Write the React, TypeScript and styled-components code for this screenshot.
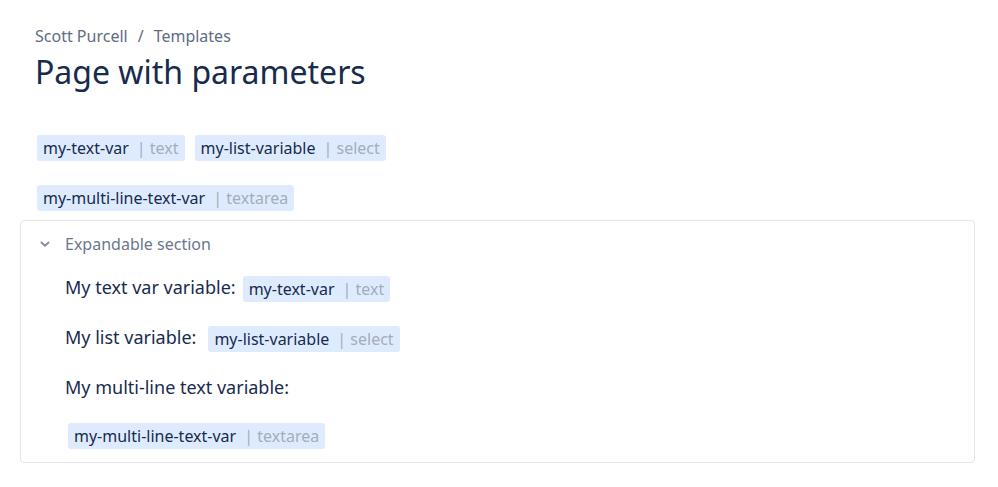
import React from "react";
import styled, { createGlobalStyle } from "styled-components";

const Global = createGlobalStyle`
  html, body { margin: 0; padding: 0; background: #ffffff; }
  body { font-family: "Noto Sans", "Open Sans", sans-serif; color: #172b4d; }
`;

const Page = styled.div`
  width: 998px;
  height: 487px;
  box-sizing: border-box;
  padding: 24px 23px 0 20px;
  display: flex;
  flex-direction: column;
`;

const Header = styled.div`
  padding-left: 15px;
  display: flex;
  flex-direction: column;
`;

const Breadcrumb = styled.div`
  font-size: 16px;
  line-height: 24px;
  color: #5e6c84;
  display: flex;
  gap: 10px;
`;

const Title = styled.h1`
  margin: 4px 0 0 0;
  font-size: 32px;
  font-weight: 400;
  line-height: 40px;
  color: #172b4d;
`;

const ChipLine = styled.div<{ $top: number }>`
  margin-top: ${(p) => p.$top}px;
  padding-left: 17px;
  display: flex;
  gap: 10px;
  height: 26px;
`;

const Chip = styled.span`
  display: inline-flex;
  align-items: center;
  height: 26px;
  box-sizing: border-box;
  padding: 0 6px;
  background: #deebff;
  border-radius: 3px;
  font-size: 16px;
  color: #172b4d;
  white-space: nowrap;
`;

const ChipType = styled.span`
  color: #a5adba;
  margin-left: 8px;
`;

const Expand = styled.div`
  margin-top: 9px;
  border: 1px solid #e4e6ea;
  border-radius: 4px;
  padding: 10px 0 13px 0;
  display: flex;
  flex-direction: column;
`;

const ExpandHeader = styled.div`
  display: flex;
  align-items: center;
  height: 26px;
  padding-left: 18px;
  gap: 14px;
  font-size: 16px;
  color: #6b778c;
`;

const Body = styled.div`
  padding-left: 44px;
  display: flex;
  flex-direction: column;
`;

const Row = styled.div<{ $top: number; $indent?: number; $gap?: number }>`
  margin-top: ${(p) => p.$top}px;
  padding-left: ${(p) => p.$indent ?? 0}px;
  display: flex;
  align-items: center;
  gap: ${(p) => p.$gap ?? 7}px;
  height: 26px;
  font-size: 18px;
  color: #172b4d;
`;

const Label = styled.span`
  position: relative;
  top: -2px;
`;

const Chevron = () => (
  <svg width="12" height="12" viewBox="0 0 12 12">
    <path d="M2.5 4.5 L6 7.8 L9.5 4.5" fill="none" stroke="#8993a4" strokeWidth="2" strokeLinecap="round" strokeLinejoin="round" />
  </svg>
);

const Var = ({ name, type }: { name: string; type: string }) => (
  <Chip>
    {name}
    <ChipType>| {type}</ChipType>
  </Chip>
);

export default function App() {
  return (
    <>
      <Global />
      <Page>
        <Header>
          <Breadcrumb>
            <span>Scott Purcell</span>
            <span>/</span>
            <span>Templates</span>
          </Breadcrumb>
          <Title>Page with parameters</Title>
        </Header>
        <ChipLine $top={43}>
          <Var name="my-text-var" type="text" />
          <Var name="my-list-variable" type="select" />
        </ChipLine>
        <ChipLine $top={24}>
          <Var name="my-multi-line-text-var" type="textarea" />
        </ChipLine>
        <Expand>
          <ExpandHeader>
            <Chevron />
            <span>Expandable section</span>
          </ExpandHeader>
          <Body>
            <Row $top={19}>
              <Label>My text var variable:</Label>
              <Var name="my-text-var" type="text" />
            </Row>
            <Row $top={24} $gap={12}>
              <Label>My list variable:</Label>
              <Var name="my-list-variable" type="select" />
            </Row>
            <Row $top={24}>
              <Label>My multi-line text variable:</Label>
            </Row>
            <Row $top={21} $indent={3}>
              <Var name="my-multi-line-text-var" type="textarea" />
            </Row>
          </Body>
        </Expand>
      </Page>
    </>
  );
}
